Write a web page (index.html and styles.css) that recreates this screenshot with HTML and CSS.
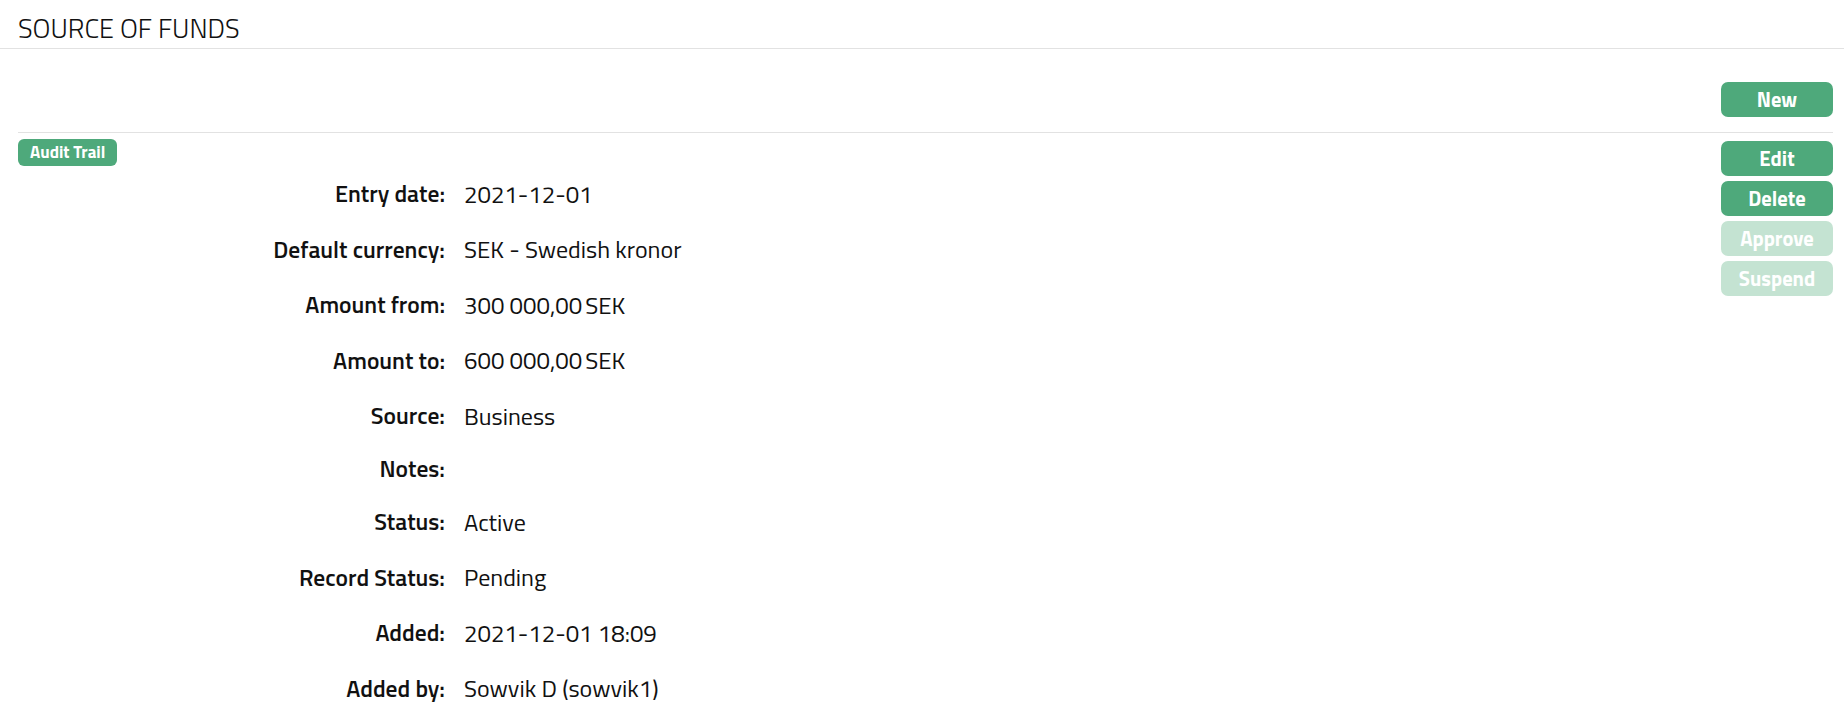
FILE: index.html
```html
<!DOCTYPE html>
<html lang="en">
<head>
<meta charset="utf-8">
<title>Source of Funds</title>
<link rel="stylesheet" href="styles.css">
</head>
<body>
<header class="header">
  <h1 class="title">SOURCE OF FUNDS</h1>
</header>
<div class="toolbar">
  <button class="btn">New</button>
</div>
<main class="main">
  <section class="content">
    <span class="badge">Audit Trail</span>
    <div class="details">
      <div class="row"><div class="label">Entry date:</div><div class="value">2021-12-01</div></div>
      <div class="row"><div class="label">Default currency:</div><div class="value">SEK - Swedish kronor</div></div>
      <div class="row"><div class="label">Amount from:</div><div class="value">300 000,00<span class="nb"></span>SEK</div></div>
      <div class="row"><div class="label">Amount to:</div><div class="value">600 000,00<span class="nb"></span>SEK</div></div>
      <div class="row"><div class="label">Source:</div><div class="value">Business</div></div>
      <div class="row"><div class="label">Notes:</div><div class="value"></div></div>
      <div class="row"><div class="label">Status:</div><div class="value">Active</div></div>
      <div class="row"><div class="label">Record Status:</div><div class="value">Pending</div></div>
      <div class="row"><div class="label">Added:</div><div class="value">2021-12-01 18:09</div></div>
      <div class="row"><div class="label">Added by:</div><div class="value">Sowvik D (sowvik1)</div></div>
    </div>
  </section>
  <aside class="actions">
    <button class="btn">Edit</button>
    <button class="btn">Delete</button>
    <button class="btn btn-disabled" disabled>Approve</button>
    <button class="btn btn-disabled" disabled>Suspend</button>
  </aside>
</main>
</body>
</html>
```

FILE: styles.css
```css
* { box-sizing: border-box; }

html, body {
  margin: 0;
  padding: 0;
  background: #ffffff;
  color: #111111;
  font-family: "Titillium Web", Roboto, "Liberation Sans", sans-serif;
}

.header {
  height: 49px;
  border-bottom: 1px solid #e2e2e2;
  padding: 12px 18px 0;
}

.title {
  margin: 0;
  font-size: 27px;
  font-weight: 300;
  line-height: 32px;
  color: #111111;
  letter-spacing: 0;
}

.toolbar {
  margin: 0 11px 0 18px;
  height: 84px;
  padding-top: 33px;
  border-bottom: 1px solid #e2e2e2;
  display: flex;
  justify-content: flex-end;
  align-items: flex-start;
}

.btn {
  width: 112px;
  height: 35px;
  border: none;
  border-radius: 7px;
  background: #4ea97b;
  color: #ffffff;
  font-family: inherit;
  font-size: 20.5px;
  font-weight: 700;
  padding: 0;
  line-height: 35px;
  cursor: pointer;
}

.btn-disabled {
  background: #c4e3d2;
  color: #ffffff;
  cursor: default;
}

.main {
  margin: 0 11px 0 18px;
  display: flex;
  justify-content: space-between;
  align-items: flex-start;
}

.content {
  padding-top: 6px;
  flex: 1;
}

.badge {
  display: inline-block;
  height: 27px;
  line-height: 27px;
  padding: 0 12px;
  border-radius: 6px;
  background: #4ea97b;
  color: #ffffff;
  font-size: 17px;
  font-weight: 700;
  vertical-align: top;
}

.details {
  display: flex;
  flex-direction: column;
}

.row {
  display: flex;
  align-items: center;
  padding: 9.75px 0;
}

.label {
  width: 427px;
  text-align: right;
  font-size: 23.5px;
  font-weight: 600;
  line-height: 31px;
  color: #111111;
}

.value {
  margin-left: 19px;
  font-size: 24px;
  font-weight: 400;
  line-height: 36px;
  color: #111111;
}

.value:empty {
  line-height: 0;
}

.nb {
  display: inline-block;
  width: 3px;
}

.actions {
  padding-top: 8px;
  display: flex;
  flex-direction: column;
  gap: 5px;
}
```
